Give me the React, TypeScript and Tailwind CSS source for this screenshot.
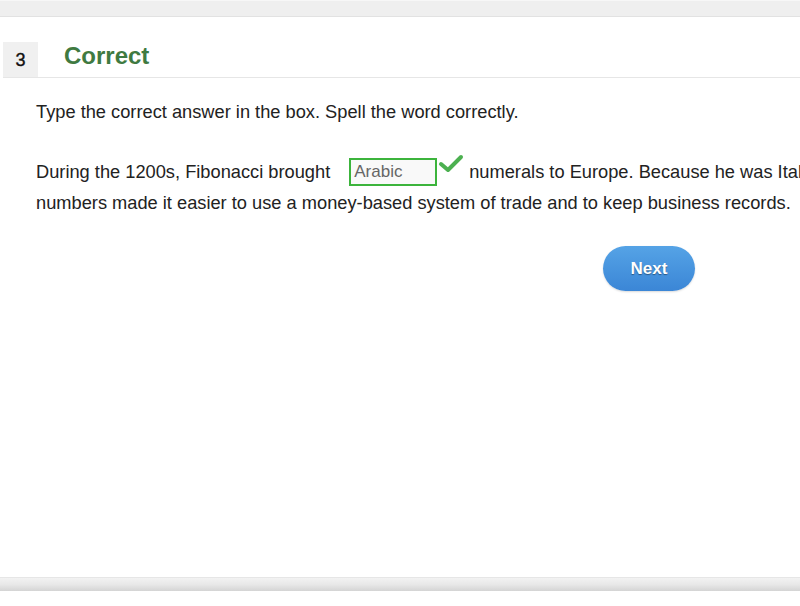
import React from "react";

export default function App() {
  return (
    <div className="w-[800px] h-[606px] bg-white overflow-hidden relative font-['Liberation_Sans',Arial,sans-serif]">
      <div className="h-[17px] bg-[#efefef] border-t border-t-[#f7f7f7] border-b border-b-[#e2e2e2]" />
      <div className="h-[25px]" />
      <div className="flex items-stretch ml-[3px] h-[35px]">
        <div className="w-[35px] bg-[#f0f0f0] flex items-center justify-center text-[18px] text-[#111] [-webkit-text-stroke:0.4px_#111] pt-[1px]">3</div>
        <div className="pl-[26px] flex items-center text-[24px] font-bold text-[#3f7a41] leading-none pb-[8px]">Correct</div>
      </div>
      <div className="ml-[3px] h-px bg-[#e6e6e6]" />
      <div className="pl-[36px] pt-[23px] text-[18.25px] text-[#222] leading-[22px] whitespace-nowrap">
        Type the correct answer in the box. Spell the word correctly.
      </div>
      <div className="pl-[36px] pt-[33px] text-[18.25px] text-[#222] leading-[31px] whitespace-nowrap">
        <div className="flex items-center h-[31px]">
          <span>During the 1200s, Fibonacci brought</span>
          <span className="ml-[19px] w-[88px] h-[28px] shrink-0 border-2 border-[#3cb43c] bg-[#f9f9f9] text-[#666] text-[17px] leading-[24px] pl-[3px]">Arabic</span>
          <svg width="26" height="20" viewBox="0 0 26 20" className="shrink-0 self-start mt-[-2px] ml-[1px]">
            <path d="M3 10 L10 16 L23 3" fill="none" stroke="#4cb050" strokeWidth="4" strokeLinecap="round" strokeLinejoin="round" />
          </svg>
          <span className="ml-[5px]">numerals to Europe. Because he was Italian, his</span>
        </div>
        <div>numbers made it easier to use a money-based system of trade and to keep business records.</div>
      </div>
      <div className="flex pl-[603px] pt-[28px]">
        <button className="w-[92px] h-[45px] rounded-full bg-gradient-to-b from-[#55a3e6] to-[#3b86d6] text-white font-bold text-[17px] [text-shadow:0_1px_1px_rgba(0,0,0,0.4)] shadow-[0_1px_2px_rgba(0,0,0,0.15)]">
          Next
        </button>
      </div>
      <div className="absolute left-0 right-0 top-[577px] h-[14px] bg-gradient-to-b from-[#f2f2f2] via-[#e8e8e8] to-[#d4d4d4] border-t border-[#e6e6e6]" />
    </div>
  );
}
